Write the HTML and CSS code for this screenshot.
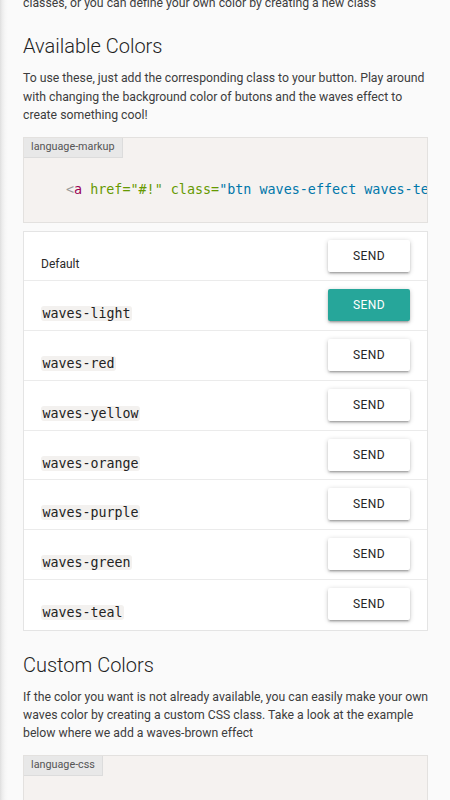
FILE: index.html
```html
<!DOCTYPE html>
<html lang="en">
<head>
<meta charset="utf-8">
<title>Waves colors</title>
<link rel="stylesheet" href="styles.css">
</head>
<body>
<main class="page">
  <p class="text text-cut">classes, or you can define your own color by creating a new class</p>

  <h2 class="title">Available Colors</h2>
  <p class="text">To use these, just add the corresponding class to your button. Play around with changing the background color of butons and the waves effect to create something cool!</p>

  <div class="codebox">
    <span class="lang">language-markup</span>
    <pre class="code"><code><span class="t-punc">&lt;</span><span class="t-tag">a</span><span class="t-attr"> href="#!" class=</span><span class="t-val">"btn waves-effect waves-teal"&gt;Send&lt;/a&gt;</span></code></pre>
  </div>

  <div class="demo">
    <div class="demo-row"><span class="name">Default</span><button class="btn">Send</button></div>
    <div class="demo-row"><code class="name tag">waves-light</code><button class="btn btn-teal">Send</button></div>
    <div class="demo-row"><code class="name tag">waves-red</code><button class="btn">Send</button></div>
    <div class="demo-row"><code class="name tag">waves-yellow</code><button class="btn">Send</button></div>
    <div class="demo-row"><code class="name tag">waves-orange</code><button class="btn">Send</button></div>
    <div class="demo-row"><code class="name tag">waves-purple</code><button class="btn">Send</button></div>
    <div class="demo-row"><code class="name tag">waves-green</code><button class="btn">Send</button></div>
    <div class="demo-row"><code class="name tag">waves-teal</code><button class="btn">Send</button></div>
  </div>

  <h2 class="title">Custom Colors</h2>
  <p class="text">If the color you want is not already available, you can easily make your own waves color by creating a custom CSS class. Take a look at the example below where we add a waves-brown effect</p>

  <div class="codebox">
    <span class="lang">language-css</span>
    <pre class="code"><code><span class="t-sel">.waves-effect.waves-brown .waves-ripple</span> <span class="t-punc">{</span>
  <span class="t-com">/* The alpha value allows the text and background color
     of the button to still show through. */</span>
  <span class="t-prop">background-color</span><span class="t-punc">:</span> rgba(121, 85, 72, 0.65)<span class="t-punc">;</span>
<span class="t-punc">}</span></code></pre>
  </div>
</main>
</body>
</html>
```

FILE: styles.css
```css
html, body {
  margin: 0;
  padding: 0;
}

body {
  background: linear-gradient(to right, #dedede 0, #ececec 2px, #f6f6f6 5px, #fafafa 8px);
  font-family: Roboto, "Liberation Sans", Arial, sans-serif;
  color: #3a3a3a;
  min-height: 800px;
}

.page {
  padding: 0 22px 40px 23px;
}

.text {
  margin: 0 -4px 12.4px 0;
  font-size: 12.25px;
  line-height: 18.4px;
  color: #3d3d3d;
}

.text-cut {
  margin-top: -6px;
}

.title {
  margin: 23px 0 12px;
  font-size: 20px;
  line-height: 22px;
  font-weight: 300;
  color: #1f1f1f;
}

.codebox {
  background: #f5f2f0;
  border: 1px solid #e3e1df;
}

.lang {
  display: inline-block;
  vertical-align: top;
  padding: 0 7px;
  height: 18.5px;
  line-height: 18.5px;
  font-size: 10.8px;
  color: #555;
  background: #e8e8e8;
  border-right: 1px solid #dcdcdc;
  border-bottom: 1px solid #dcdcdc;
}

.code {
  margin: 0;
  padding: 22px 0 23px 42px;
  font-family: "DejaVu Sans Mono", "Liberation Mono", monospace;
  font-size: 13.4px;
  line-height: 19px;
  color: #000;
  white-space: pre;
  overflow: hidden;
}

.t-punc { color: #999; }
.t-tag { color: #905; }
.t-attr { color: #690; }
.t-val { color: #07a; }
.t-sel { color: #690; }
.t-com { color: #708090; }
.t-prop { color: #905; }

.demo {
  margin-top: 8px;
  background: #fff;
  border: 1px solid #e4e4e4;
}

.demo-row {
  box-sizing: border-box;
  display: flex;
  justify-content: space-between;
  align-items: flex-start;
  height: 49.75px;
  padding: 0 17px;
  border-bottom: 1px solid #ebebeb;
}

.demo-row:last-child {
  border-bottom: none;
}

.name {
  margin-top: 25px;
  line-height: 15px;
  font-size: 12px;
  color: #2a2a2a;
}

.tag {
  font-family: "DejaVu Sans Mono", "Liberation Mono", monospace;
  font-size: 13.3px;
  padding: 0 1.5px;
  background: #f3f1ef;
  border-radius: 3px;
  color: #222;
}

.btn {
  margin-top: 8px;
  width: 82px;
  height: 32px;
  border: none;
  border-radius: 2px;
  background: #fff;
  color: #262626;
  font-family: Roboto, "Liberation Sans", Arial, sans-serif;
  font-size: 12px;
  letter-spacing: 0.4px;
  text-transform: uppercase;
  box-shadow: 0 2px 2px 0 rgba(0,0,0,0.14), 0 3px 1px -2px rgba(0,0,0,0.12), 0 1px 5px 0 rgba(0,0,0,0.2);
  padding: 0;
}

.btn-teal {
  background: #26a69a;
  color: #fff;
}
```
